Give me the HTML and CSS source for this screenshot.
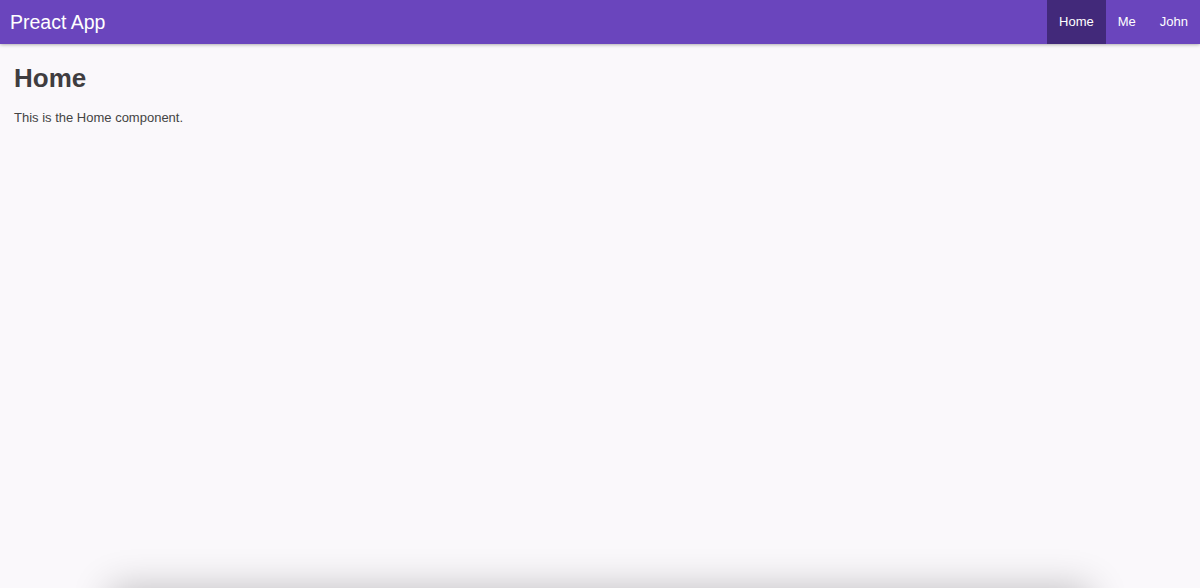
FILE: index.html
```html
<!DOCTYPE html>
<html>
<head>
<meta charset="utf-8">
<title>Preact App</title>
<link rel="stylesheet" href="styles.css">
</head>
<body>
<header class="header">
  <h1 class="brand">Preact App</h1>
  <nav class="nav">
    <a class="nav-link active" href="#">Home</a>
    <a class="nav-link" href="#">Me</a>
    <a class="nav-link" href="#">John</a>
  </nav>
</header>
<main class="home">
  <h1 class="title">Home</h1>
  <p class="text">This is the Home component.</p>
</main>
<div class="offscreen-sheet"></div>
</body>
</html>
```
FILE: styles.css
```css
html, body {
  margin: 0;
  padding: 0;
  height: 100%;
}
body {
  background: #faf8fb;
  font-family: "Liberation Sans", Arial, sans-serif;
  color: #444;
  overflow: hidden;
}
.header {
  position: relative;
  z-index: 2;
  height: 44px;
  display: flex;
  justify-content: space-between;
  background: #6a45bd;
  box-shadow: 0 0 4px rgba(0, 0, 0, 0.45);
}
.brand {
  margin: 0;
  padding: 0 10px;
  font-size: 19.5px;
  font-weight: 400;
  line-height: 44px;
  color: #fff;
}
.nav {
  display: flex;
}
.nav-link {
  display: block;
  box-sizing: border-box;
  min-width: 39px;
  padding: 0 12px;
  font-size: 13px;
  line-height: 44px;
  text-align: center;
  color: #fff;
  text-decoration: none;
}
.nav-link.active {
  background: #42297a;
}
.home {
  padding: 19px 14px;
}
.title {
  margin: 0 0 17px;
  font-size: 26px;
  line-height: 30px;
  font-weight: 700;
  color: #3f3d40;
}
.text {
  margin: 0;
  font-size: 13px;
  line-height: 16px;
  color: #444;
}
.offscreen-sheet {
  position: fixed;
  left: 110px;
  right: 110px;
  top: 100%;
  height: 200px;
  background: #faf8fb;
  box-shadow: 0 0 36px rgba(0, 0, 0, 0.24);
}
```
